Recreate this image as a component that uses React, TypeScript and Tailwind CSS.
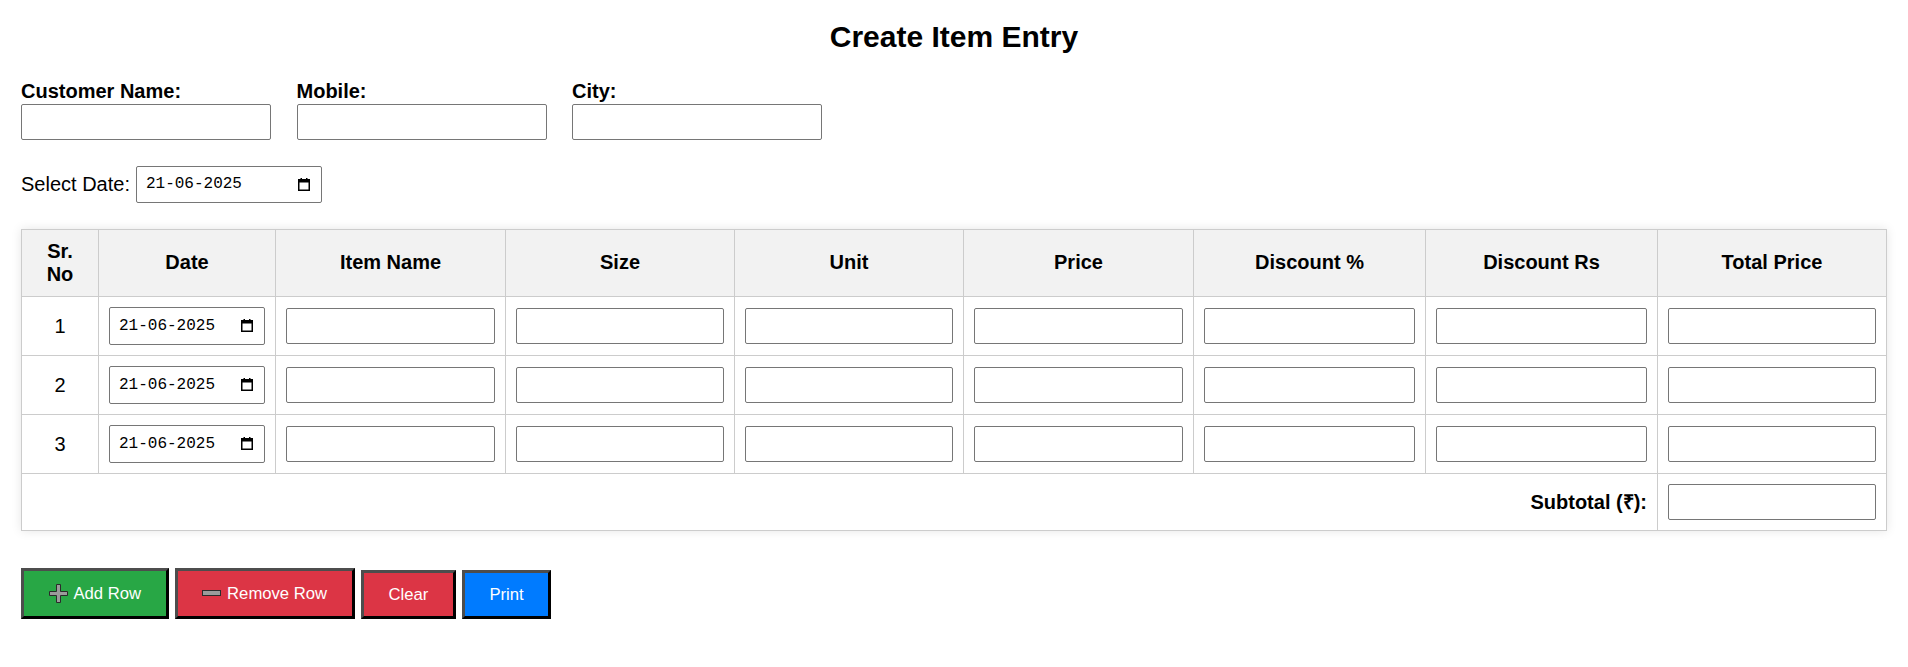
import { useState } from "react"

const columns = ["Item Name", "Size", "Unit", "Price", "Discount %", "Discount Rs", "Total Price"]
const colWidths = ["w-[230px]", "w-[229px]", "w-[229px]", "w-[230px]", "w-[232px]", "w-[232px]", ""]

function CalendarIcon() {
    return (
        <svg width="12" height="13" viewBox="0 0 12 13" className="shrink-0">
            <rect x="0.75" y="1.75" width="10.5" height="10.5" fill="none" stroke="#000" strokeWidth="1.5" />
            <rect x="0" y="1" width="12" height="3.5" fill="#000" />
            <rect x="2.5" y="0" width="1.5" height="2" fill="#000" />
            <rect x="8" y="0" width="1.5" height="2" fill="#000" />
        </svg>
    )
}

function DateBox({ className }: { className: string }) {
    return (
        <div className={`flex items-center justify-between border border-[#767676] rounded-[2px] bg-white pl-[9px] pr-[11px] ${className}`}>
            <span className="font-['Liberation_Mono',monospace] text-[16px] leading-none text-black">21-06-2025</span>
            <CalendarIcon />
        </div>
    )
}

function PlusIcon() {
    return (
        <svg width="19" height="19" viewBox="0 0 19 19" className="shrink-0">
            <path d="M7.5 0.5h4v7h7v4h-7v7h-4v-7h-7v-4h7z" fill="#9b9b9b" stroke="#2b2b2b" strokeWidth="1" />
        </svg>
    )
}

function MinusIcon() {
    return (
        <svg width="19" height="6" viewBox="0 0 19 6" className="shrink-0">
            <rect x="0.5" y="0.5" width="18" height="5" fill="#9b9b9b" stroke="#2b2b2b" strokeWidth="1" />
        </svg>
    )
}

const inputCls = "w-full h-[36px] border border-[#767676] rounded-[2px] bg-white px-[3px] text-[16px]"
const btnBorder = "border-[3px] border-t-[#4d4d4d] border-l-[#4d4d4d] border-b-black border-r-black"

export default function App() {
    const [rows, setRows] = useState([1, 2, 3])
    return (
        <div className="min-h-screen bg-white px-[21px] pt-[20px] pb-[20px] font-['Liberation_Sans',Arial,sans-serif] text-black">
            <h2 className="text-center text-[30px] font-bold leading-[34.5px] mb-[25px]">Create Item Entry</h2>

            <div className="flex gap-[25.5px]">
                {["Customer Name:", "Mobile:", "City:"].map((l) => (
                    <div key={l}>
                        <label className="block text-[20px] font-bold leading-[23px] mb-[1px]">{l}</label>
                        <input className="w-[250px] h-[36px] border border-[#767676] rounded-[2px] px-[3px] text-[16px]" />
                    </div>
                ))}
            </div>

            <div className="mt-[26px] flex items-center gap-[6px]">
                <span className="text-[20px] leading-[23px]">Select Date:</span>
                <DateBox className="w-[186px] h-[37px]" />
            </div>

            <table className="mt-[26px] w-full table-fixed border-collapse border border-[#cccccc] shadow-[0_0_10px_rgba(0,0,0,0.1)] text-[20px]">
                <thead>
                    <tr className="bg-[#f2f2f2]">
                        <th className="w-[77px] border border-[#cccccc] p-[10px] font-bold leading-[23px]">Sr. No</th>
                        <th className="w-[177px] border border-[#cccccc] p-[10px] font-bold leading-[23px]">Date</th>
                        {columns.map((c, i) => (
                            <th key={c} className={`${colWidths[i]} border border-[#cccccc] p-[10px] font-bold leading-[23px]`}>{c}</th>
                        ))}
                    </tr>
                </thead>
                <tbody>
                    {rows.map((r) => (
                        <tr key={r}>
                            <td className="border border-[#cccccc] p-[10px] text-center">{r}</td>
                            <td className="border border-[#cccccc] p-[10px]">
                                <DateBox className="w-full h-[38px]" />
                            </td>
                            {columns.map((c) => (
                                <td key={c} className="border border-[#cccccc] p-[10px]">
                                    <input className={inputCls} />
                                </td>
                            ))}
                        </tr>
                    ))}
                    <tr>
                        <td colSpan={8} className="border border-[#cccccc] p-[10px] text-right font-bold">Subtotal (₹):</td>
                        <td className="border border-[#cccccc] p-[10px]">
                            <input className={inputCls} />
                        </td>
                    </tr>
                </tbody>
            </table>

            <div className="mt-[37px] flex items-end gap-[6px] text-[16.67px] text-white">
                <button onClick={() => setRows([...rows, rows.length + 1])} className={`h-[51px] px-[24.5px] bg-[#28a745] ${btnBorder} flex items-center gap-[6px]`}>
                    <PlusIcon />
                    <span>Add Row</span>
                </button>
                <button onClick={() => rows.length > 1 && setRows(rows.slice(0, -1))} className={`h-[51px] px-[24.5px] bg-[#dc3545] ${btnBorder} flex items-center gap-[6px]`}>
                    <MinusIcon />
                    <span>Remove Row</span>
                </button>
                <button className={`h-[49px] px-[25px] bg-[#dc3545] ${btnBorder}`}>Clear</button>
                <button className={`h-[49px] px-[24px] bg-[#007bff] ${btnBorder}`}>Print</button>
            </div>
        </div>
    )
}
